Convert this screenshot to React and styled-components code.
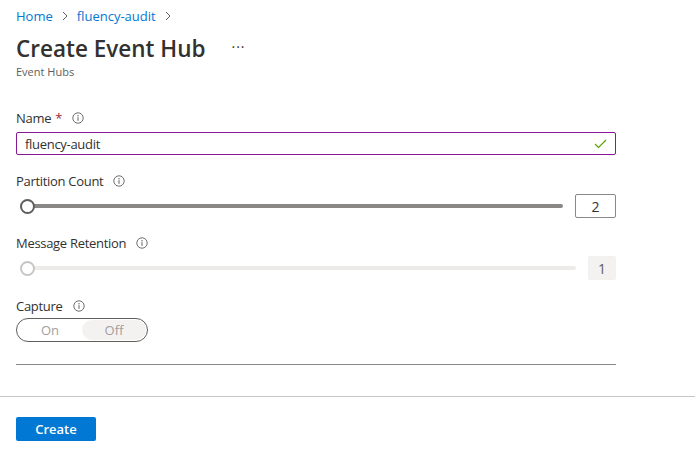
import React from 'react';
import styled, { createGlobalStyle } from 'styled-components';

const GlobalStyle = createGlobalStyle`
  body {
    margin: 0;
    background: #fff;
    font-family: "Segoe UI", "Open Sans", "Noto Sans", sans-serif;
    color: #323130;
  }
`;

const Page = styled.div`
  width: 695px;
  min-height: 461px;
  display: flex;
  flex-direction: column;
`;

const Header = styled.div`
  padding: 6px 16px 0;
`;

const Breadcrumb = styled.nav`
  display: flex;
  align-items: center;
  gap: 8px;
  height: 20px;
  font-size: 13px;
`;

const Crumb = styled.a`
  color: #0078d4;
  text-decoration: none;
`;

const Chevron = styled.span`
  display: inline-flex;
  color: #605e5c;
`;

const TitleRow = styled.div`
  display: flex;
  align-items: center;
  gap: 26px;
  margin-top: 8px;
  height: 28px;
`;

const Title = styled.h1`
  margin: 0;
  font-size: 22.5px;
  font-weight: 600;
  color: #323130;
`;

const More = styled.span`
  font-size: 14px;
  color: #323130;
  letter-spacing: 1px;
  margin-top: -4px;
`;

const Subtitle = styled.div`
  font-size: 11px;
  color: #605e5c;
  margin-top: 2px;
  line-height: 16px;
`;

const Form = styled.div`
  width: 600px;
  padding: 28px 16px 0;
  display: flex;
  flex-direction: column;
`;

const Field = styled.div`
  display: flex;
  flex-direction: column;
  gap: ${p => p.$gap}px;
  margin-bottom: ${p => p.$mb}px;
`;

const Label = styled.label`
  display: flex;
  align-items: center;
  height: 20px;
  font-size: 13px;
  letter-spacing: -0.3px;
  color: #323130;
`;

const Required = styled.span`
  color: #a4262c;
  margin-left: 4px;
`;

const Info = styled.span`
  display: inline-flex;
  margin-left: 10px;
  color: #605e5c;
`;

const InputWrap = styled.div`
  display: flex;
  align-items: center;
  height: 23px;
  border: 1px solid #881798;
  border-radius: 2px;
  padding: 0 8px;
  box-sizing: border-box;
`;

const Input = styled.input`
  flex: 1;
  border: none;
  outline: none;
  padding: 0;
  font: inherit;
  font-size: 13px;
  letter-spacing: -0.3px;
  color: #323130;
  background: transparent;
`;

const SliderRow = styled.div`
  display: flex;
  align-items: center;
  height: 24px;
  gap: 12px;
`;

const Slider = styled.div`
  flex: 1;
  position: relative;
  height: 24px;
  display: flex;
  align-items: center;
  padding-left: 11px;
`;

const Track = styled.div`
  flex: 1;
  height: 4px;
  border-radius: 2px;
  background: ${p => (p.$disabled ? '#edebe9' : '#8a8886')};
`;

const Thumb = styled.span`
  position: absolute;
  left: 4px;
  top: 50%;
  width: 15px;
  height: 15px;
  margin-top: -7.5px;
  box-sizing: border-box;
  border-radius: 50%;
  background: #fff;
  border: 2px solid ${p => (p.$disabled ? '#c8c6c4' : '#605e5c')};
`;

const ValueBox = styled.div`
  width: ${p => (p.$disabled ? 28 : 41)}px;
  height: 24px;
  box-sizing: border-box;
  display: flex;
  align-items: center;
  justify-content: center;
  font-size: 14px;
  border-radius: 2px;
  border: ${p => (p.$disabled ? 'none' : '1px solid #8a8886')};
  background: ${p => (p.$disabled ? '#f3f2f1' : '#fff')};
  color: ${p => (p.$disabled ? '#605e5c' : '#323130')};
`;

const Toggle = styled.div`
  width: 132px;
  height: 24px;
  box-sizing: border-box;
  border: 1px solid #605e5c;
  border-radius: 12px;
  padding: 1px;
  display: flex;
`;

const ToggleOption = styled.span`
  flex: 1;
  display: flex;
  align-items: center;
  justify-content: center;
  font-size: 13px;
  color: #a19f9d;
  border-radius: 11px;
  background: ${p => (p.$active ? '#f3f2f1' : 'transparent')};
`;

const Divider = styled.hr`
  width: 600px;
  margin: 22px 0 0;
  border: none;
  border-top: 1px solid #8a8886;
`;

const Footer = styled.div`
  margin-top: 31px;
  border-top: 1px solid #c8c6c4;
  padding: 20px 16px;
`;

const PrimaryButton = styled.button`
  width: 80px;
  height: 24px;
  border: none;
  border-radius: 2px;
  background: #0078d4;
  color: #fff;
  font: inherit;
  font-size: 13px;
  font-weight: 600;
  cursor: pointer;
`;

const ChevronIcon = () => (
  <svg width="8" height="10" viewBox="0 0 8 10">
    <path d="M2 1l4 4-4 4" fill="none" stroke="currentColor" strokeWidth="1" />
  </svg>
);

const InfoIcon = () => (
  <svg width="12" height="12" viewBox="0 0 12 12">
    <circle cx="6" cy="6" r="5.2" fill="none" stroke="currentColor" strokeWidth="0.9" />
    <circle cx="6" cy="3.7" r="0.7" fill="currentColor" />
    <path d="M6 5.2v3.6" stroke="currentColor" strokeWidth="1" />
  </svg>
);

const CheckIcon = () => (
  <svg width="13" height="10" viewBox="0 0 13 10">
    <path d="M1 5l3.5 3.5L12 1" fill="none" stroke="#57a300" strokeWidth="1.2" />
  </svg>
);

const App = () => (
  <Page>
    <GlobalStyle />
    <Header>
      <Breadcrumb>
        <Crumb>Home</Crumb>
        <Chevron><ChevronIcon /></Chevron>
        <Crumb>fluency-audit</Crumb>
        <Chevron><ChevronIcon /></Chevron>
      </Breadcrumb>
      <TitleRow>
        <Title>Create Event Hub</Title>
        <More>···</More>
      </TitleRow>
      <Subtitle>Event Hubs</Subtitle>
    </Header>

    <Form>
      <Field $gap={4} $mb={16}>
        <Label>
          Name<Required>*</Required>
          <Info><InfoIcon /></Info>
        </Label>
        <InputWrap>
          <Input defaultValue="fluency-audit" />
          <CheckIcon />
        </InputWrap>
      </Field>

      <Field $gap={3} $mb={15}>
        <Label>
          Partition Count
          <Info><InfoIcon /></Info>
        </Label>
        <SliderRow>
          <Slider>
            <Track />
            <Thumb />
          </Slider>
          <ValueBox>2</ValueBox>
        </SliderRow>
      </Field>

      <Field $gap={3} $mb={16}>
        <Label>
          Message Retention
          <Info><InfoIcon /></Info>
        </Label>
        <SliderRow>
          <Slider>
            <Track $disabled />
            <Thumb $disabled />
          </Slider>
          <ValueBox $disabled>1</ValueBox>
        </SliderRow>
      </Field>

      <Field $gap={2} $mb={0}>
        <Label>
          Capture
          <Info><InfoIcon /></Info>
        </Label>
        <Toggle>
          <ToggleOption>On</ToggleOption>
          <ToggleOption $active>Off</ToggleOption>
        </Toggle>
      </Field>

      <Divider />
    </Form>

    <Footer>
      <PrimaryButton>Create</PrimaryButton>
    </Footer>
  </Page>
);

export default App;
